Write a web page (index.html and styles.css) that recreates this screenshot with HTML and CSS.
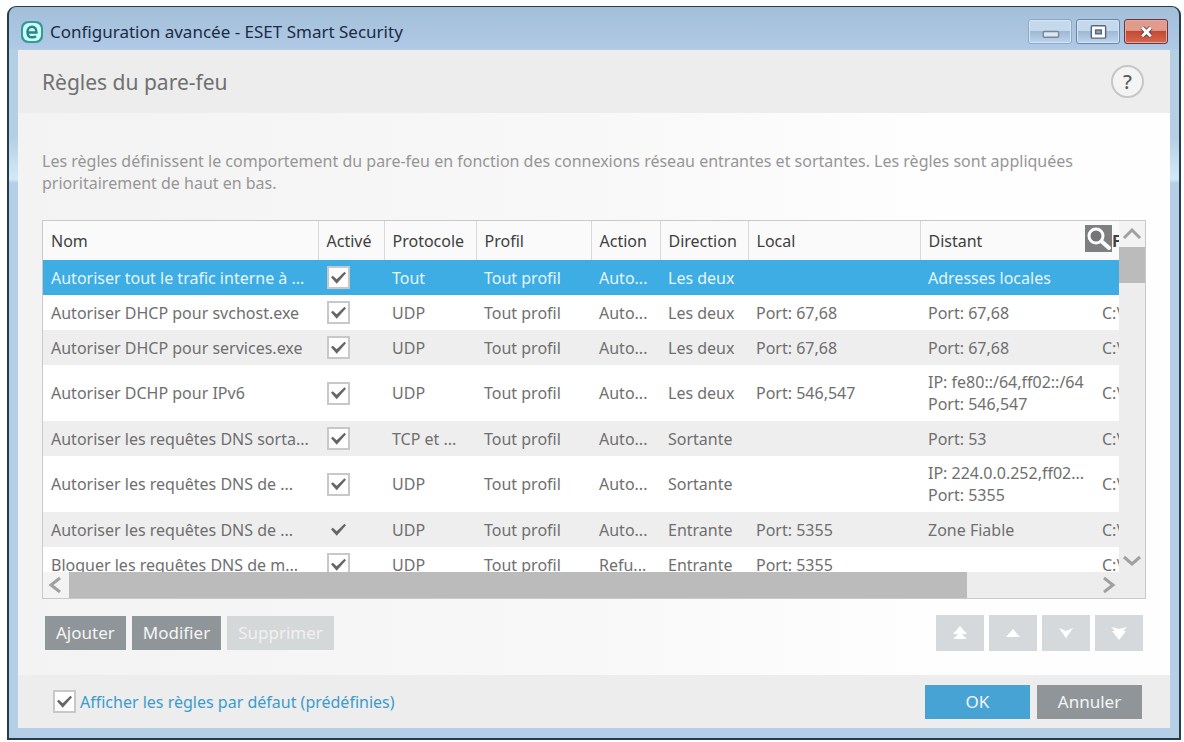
FILE: index.html
```html
<!DOCTYPE html>
<html lang="fr">
<head>
<meta charset="utf-8">
<title>Configuration avancée - ESET Smart Security</title>
<link rel="stylesheet" href="styles.css">
</head>
<body>
<div class="window">
  <header class="titlebar">
    <svg class="logo" viewBox="0 0 24 24" aria-hidden="true">
      <rect x="1" y="1" width="22" height="22" rx="7" fill="#2f9c9d"/>
      <rect x="3" y="3" width="18" height="18" rx="6" fill="#d2fbf5"/>
      <path d="M7.500 12.500H16.500C16.500 8.500 14.500 6.700 12 6.700C9.300 6.700 7.500 9 7.500 12.200C7.500 15.500 9.300 17.300 12.200 17.300C13.700 17.300 15 16.900 16 16.200" fill="none" stroke="#23878a" stroke-width="2.400"/>
    </svg>
    <h1 class="caption">Configuration avancée - ESET Smart Security</h1>
    <div class="window-buttons">
      <button class="winbtn winbtn-min" aria-label="Réduire"><svg viewBox="0 0 44 24"><rect x="15" y="12" width="16" height="6" rx="1" fill="#dde7f1" stroke="#75869c" stroke-width="1.500"/></svg></button>
      <button class="winbtn" aria-label="Agrandir"><svg viewBox="0 0 44 24"><rect x="15" y="6" width="15" height="13" rx="1" fill="#fff" stroke="#596779" stroke-width="1.500"/><rect x="19.500" y="10.500" width="6" height="4" fill="#8ba2bb" stroke="#596779" stroke-width="1.500"/></svg></button>
      <button class="winbtn winbtn-close" aria-label="Fermer"><svg viewBox="0 0 44 24"><path d="M18 8l9 9M27 8l-9 9" stroke="#66404a" stroke-width="5"/><path d="M18 8l9 9M27 8l-9 9" stroke="#fff" stroke-width="3"/></svg></button>
    </div>
  </header>

  <main class="client">
    <div class="heading">
      <h2 class="title">Règles du pare-feu</h2>
      <button class="help" aria-label="Aide">?</button>
    </div>

    <div class="content">
      <p class="intro">Les règles définissent le comportement du pare-feu en fonction des connexions réseau entrantes et sortantes. Les règles sont appliquées prioritairement de haut en bas.</p>

      <div class="grid">
        <div class="viewport">
          <table class="rules">
            <colgroup>
              <col class="c-name"><col class="c-on"><col class="c-proto"><col class="c-profile"><col class="c-action"><col class="c-dir"><col class="c-local"><col class="c-remote"><col class="c-app">
            </colgroup>
            <thead>
              <tr><th>Nom</th><th>Activé</th><th>Protocole</th><th>Profil</th><th>Action</th><th>Direction</th><th>Local</th><th>Distant</th><th class="app-head">F</th></tr>
            </thead>
            <tbody>
              <tr class="selected"><td>Autoriser tout le trafic interne à ...</td><td><input type="checkbox" class="check" aria-label="Activé" checked></td><td>Tout</td><td>Tout profil</td><td>Auto...</td><td>Les deux</td><td></td><td>Adresses locales</td><td></td></tr>
              <tr><td>Autoriser DHCP pour svchost.exe</td><td><input type="checkbox" class="check" aria-label="Activé" checked></td><td>UDP</td><td>Tout profil</td><td>Auto...</td><td>Les deux</td><td>Port: 67,68</td><td>Port: 67,68</td><td>C:\</td></tr>
              <tr><td>Autoriser DHCP pour services.exe</td><td><input type="checkbox" class="check" aria-label="Activé" checked></td><td>UDP</td><td>Tout profil</td><td>Auto...</td><td>Les deux</td><td>Port: 67,68</td><td>Port: 67,68</td><td>C:\</td></tr>
              <tr class="tall"><td>Autoriser DCHP pour IPv6</td><td><input type="checkbox" class="check" aria-label="Activé" checked></td><td>UDP</td><td>Tout profil</td><td>Auto...</td><td>Les deux</td><td>Port: 546,547</td><td>IP: fe80::/64,ff02::/64<br>Port: 546,547</td><td>C:\</td></tr>
              <tr><td>Autoriser les requêtes DNS sorta...</td><td><input type="checkbox" class="check" aria-label="Activé" checked></td><td>TCP et ...</td><td>Tout profil</td><td>Auto...</td><td>Sortante</td><td></td><td>Port: 53</td><td>C:\</td></tr>
              <tr class="tall"><td>Autoriser les requêtes DNS de ...</td><td><input type="checkbox" class="check" aria-label="Activé" checked></td><td>UDP</td><td>Tout profil</td><td>Auto...</td><td>Sortante</td><td></td><td>IP: 224.0.0.252,ff02...<br>Port: 5355</td><td>C:\</td></tr>
              <tr><td>Autoriser les requêtes DNS de ...</td><td><input type="checkbox" class="check" aria-label="Activé" checked disabled></td><td>UDP</td><td>Tout profil</td><td>Auto...</td><td>Entrante</td><td>Port: 5355</td><td>Zone Fiable</td><td>C:\</td></tr>
              <tr><td>Bloquer les requêtes DNS de m...</td><td><input type="checkbox" class="check" aria-label="Activé" checked></td><td>UDP</td><td>Tout profil</td><td>Refu...</td><td>Entrante</td><td>Port: 5355</td><td></td><td>C:\</td></tr>
            </tbody>
          </table>
          <button class="search" aria-label="Rechercher"><svg viewBox="0 0 27 27"><rect width="27" height="27" fill="#7d7f81"/><path d="M15 15l9 8" stroke="#fff" stroke-width="4" stroke-linecap="round"/><circle cx="11" cy="11" r="7" fill="#737577" stroke="#fff" stroke-width="3"/></svg></button>
        </div>
        <div class="vscroll">
          <button class="scrollbtn" aria-label="Défiler vers le haut"><svg viewBox="0 0 26 26"><path d="M5 17l8-8 8 8"/></svg></button>
          <div class="vthumb"></div>
          <button class="scrollbtn scroll-end" aria-label="Défiler vers le bas"><svg viewBox="0 0 26 26"><path d="M5 11l8 7 8-7"/></svg></button>
        </div>
        <div class="hscroll">
          <button class="scrollbtn" aria-label="Défiler à gauche"><svg viewBox="0 0 26 26"><path d="M17 6l-9 7 9 7"/></svg></button>
          <div class="hthumb"></div>
          <button class="scrollbtn scroll-end" aria-label="Défiler à droite"><svg viewBox="0 0 26 26"><path d="M11 6l9 7-9 7"/></svg></button>
        </div>
        <div class="corner"></div>
      </div>

      <div class="actions">
        <button class="btn">Ajouter</button>
        <button class="btn">Modifier</button>
        <button class="btn" disabled>Supprimer</button>
        <div class="order">
          <button class="move" aria-label="Placer en premier" disabled><svg viewBox="0 0 20 18"><path d="M10 2l7 8H3zM10 8l7 7H3z"/></svg></button>
          <button class="move" aria-label="Monter" disabled><svg viewBox="0 0 20 18"><path d="M10 5l7 8H3z"/></svg></button>
          <button class="move" aria-label="Descendre" disabled><svg viewBox="0 0 20 18"><path d="M3 4l7 3 7-3-7 10z"/></svg></button>
          <button class="move" aria-label="Placer en dernier" disabled><svg viewBox="0 0 20 18"><path d="M2 3l8 2 8-2-4 4h3l-7 9-7-9h3z"/></svg></button>
        </div>
      </div>
    </div>

    <footer class="footer">
      <label class="defaults"><input type="checkbox" class="check" checked>Afficher les règles par défaut (prédéfinies)</label>
      <button class="btn dialog-btn primary">OK</button>
      <button class="btn dialog-btn">Annuler</button>
    </footer>
  </main>
</div>
</body>
</html>
```
FILE: styles.css
```css
* { box-sizing: border-box; }

body {
  margin: 0;
  height: 100vh;
  padding: 6px 3px 2px 7px;
  background: #fff;
  font-family: "Noto Sans", "Open Sans", sans-serif;
  font-size: 16px;
  line-height: 22px;
  color: #6f6f6f;
}

button { font: inherit; border: 0; padding: 0; cursor: pointer; }
button:disabled { cursor: default; }
svg { display: block; }

.window {
  height: 100%;
  display: flex;
  flex-direction: column;
  padding: 0 9px 10px;
  border: 2px solid #243d4c;
  border-top-width: 1px;
  border-radius: 9px 9px 0 0;
  background:
    linear-gradient(#a3bfd8 0, #b0c9e6 42px, transparent 42px),
    linear-gradient(#b4cfe4 0, #b4cfe4 130px, #d3e9f7 172px, #b4cfe6 176px);
}

.titlebar {
  flex: none;
  height: 43px;
  display: flex;
  align-items: center;
  gap: 6px;
  padding: 6px 2px 0;
}
.logo { width: 24px; height: 24px; }
.caption {
  flex: 1;
  margin: 0;
  font-size: 17px;
  font-weight: 400;
  color: #1b2b45;
}
.window-buttons { display: flex; gap: 4px; }
.winbtn {
  width: 44px;
  height: 25px;
  border: 1px solid #6d86a3;
  border-radius: 3px;
  background: linear-gradient(#c5d9ed 0 48%, #9fb9d5 50%, #bdd5ec);
  box-shadow: inset 0 0 0 1px #d5e4f2;
}
.winbtn-min { border-color: #90a9c5; }
.winbtn-close {
  border-color: #6b3540;
  background: linear-gradient(#e19b8c 0 45%, #c34a32 50%, #d4694f);
  box-shadow: inset 0 0 0 1px #e5a99c;
}

.client {
  flex: 1;
  min-height: 0;
  display: flex;
  flex-direction: column;
  background: #ededed;
}
.heading {
  flex: none;
  height: 63px;
  padding: 0 26px 0 24px;
  display: flex;
  align-items: center;
  justify-content: space-between;
}
.title { margin: 0; font-size: 21px; font-weight: 400; color: #707070; }
.help {
  width: 33px;
  height: 33px;
  border: 2px solid #c6c6c6;
  border-radius: 50%;
  background: #f4f4f4;
  color: #5c5c5c;
  font-size: 20px;
  font-weight: 500;
}

.content {
  flex: 1;
  min-height: 0;
  display: flex;
  flex-direction: column;
  padding: 37px 24px 24px;
  background: linear-gradient(90deg, #f3f3f3, #f8f8f8 50%, #fefefe 80%);
}
.intro { margin: 0; color: #969696; }

.grid {
  flex: 1;
  min-height: 0;
  margin-top: 26px;
  display: grid;
  grid-template-columns: minmax(0, 1fr) 26px;
  grid-template-rows: minmax(0, 1fr) 26px;
  border: 1px solid #c9c9c9;
}
.viewport { position: relative; overflow: hidden; background: #fff; }

.rules {
  width: 1240px;
  table-layout: fixed;
  border-collapse: collapse;
  white-space: nowrap;
}
.c-name { width: 275px; }
.c-on { width: 66px; }
.c-proto { width: 92px; }
.c-profile { width: 115px; }
.c-action { width: 69px; }
.c-dir { width: 88px; }
.c-local { width: 172px; }
.c-remote { width: 174px; }
.rules th, .rules td {
  padding: 0 0 0 8px;
  text-align: left;
  font-weight: 400;
  overflow: hidden;
}
.rules th {
  height: 39px;
  background: #fafafa;
  border-right: 1px solid #d9d9d9;
  color: #404040;
}
.rules td { height: 35px; }
.rules .tall td { height: 56px; }
.rules tr:nth-child(odd) td { background: #eeeeee; }
.rules .tall td { background: #fff; }
.rules tbody .selected td { background: #3dade3; color: #e4f5fc; }
.rules .app-head { padding-left: 18px; font-weight: 700; }
.rules th:nth-child(8) { border-right: 0; }

.check {
  appearance: none;
  display: block;
  flex: none;
  width: 23px;
  height: 23px;
  margin: 0 0 0 1px;
  padding: 2px;
  border: 2px solid #c8c8c8;
  background: #fff;
}
.check:checked::before {
  content: "";
  display: block;
  width: 15px;
  height: 15px;
  background: #666;
  clip-path: polygon(0 48%, 12% 38%, 38% 62%, 90% 12%, 100% 22%, 38% 92%);
}
.check:disabled { border-color: transparent; background: transparent; }

.search {
  position: absolute;
  top: 4px;
  right: 7px;
  width: 27px;
  height: 27px;
}

.vscroll, .hscroll, .corner { background: #ededed; }
.vscroll { display: flex; flex-direction: column; }
.hscroll { display: flex; }
.scrollbtn { flex: none; width: 26px; height: 26px; background: #f3f3f3; }
.scrollbtn path { fill: none; stroke: #a0a0a0; stroke-width: 3; }
.scroll-end { background: transparent; }
.vthumb { height: 36px; background: #bbb; }
.vscroll .scroll-end { margin-top: auto; }
.hthumb { width: 83.5%; background: #bbb; }
.hscroll .scroll-end { margin-left: auto; }

.actions {
  flex: none;
  display: flex;
  align-items: center;
  gap: 6px;
  margin-top: 16px;
  padding: 0 3px;
}
.btn {
  height: 34px;
  padding: 0 11px;
  background: #8f9599;
  color: #f5f5f5;
  font-size: 17px;
}
.btn:disabled { background: #d5d8d9; color: #f1f1f1; }
.order { display: flex; gap: 5px; margin-left: auto; }
.move {
  width: 48px;
  height: 36px;
  display: grid;
  place-items: center;
  background: #d6d9db;
}
.move svg { width: 20px; height: 18px; fill: #fff; }

.footer {
  flex: none;
  height: 53px;
  display: flex;
  align-items: center;
  gap: 7px;
  padding: 0 28px 0 34px;
}
.defaults {
  flex: 1;
  display: flex;
  align-items: center;
  gap: 4px;
  color: #3b9bcd;
}
.dialog-btn { width: 105px; }
.primary { background: #48a3d5; }
```
